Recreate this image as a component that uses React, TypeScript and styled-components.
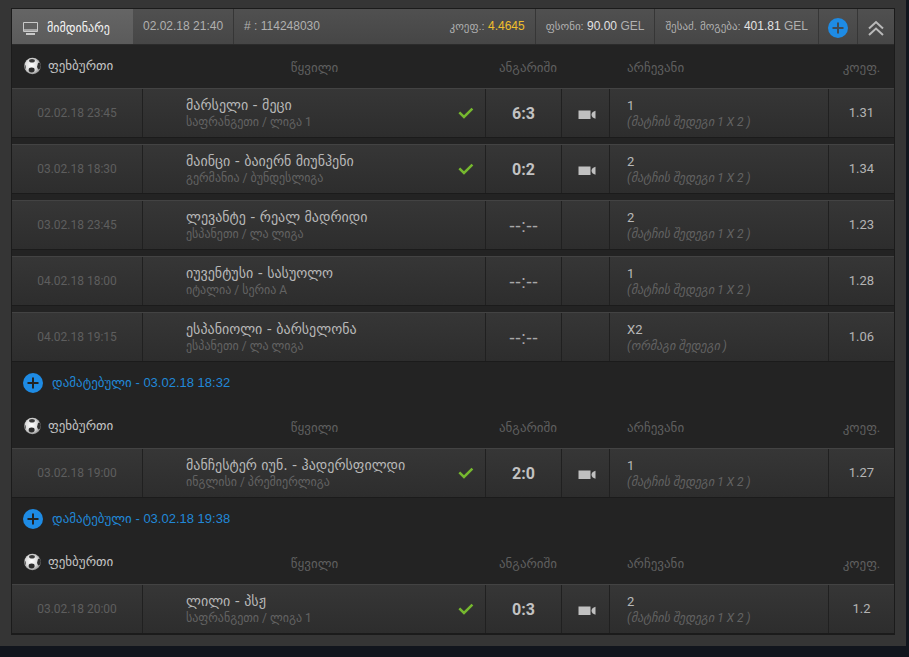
import React from "react";
import styled, { createGlobalStyle } from "styled-components";

const GlobalStyle = createGlobalStyle`
  * { box-sizing: border-box; }
  body {
    margin: 0;
    background: #11151d;
    color: #b4b4b4;
    font: 12px/16px Roboto, "DejaVu Sans", sans-serif;
  }
`;

const Frame = styled.main`
  margin-right: 3px;
  padding: 8px 11px 11px;
  background: #353535;
`;

const Ticket = styled.section`
  border: 1px solid #1b1b1b;
  background: #232323;
`;

const Summary = styled.header`
  display: flex;
  height: 36px;
  border-bottom: 1px solid #2b2b2b;
  background: linear-gradient(#505050, #464646);
  color: #b0b0b0;
  font-family: "Liberation Sans", "DejaVu Sans", sans-serif;
  white-space: nowrap;
`;

const Status = styled.div`
  display: flex;
  align-items: center;
  gap: 9px;
  width: 121px;
  padding: 2px 0 0 11px;
  background: linear-gradient(#656565, #5b5b5b);
  color: #f4f4f4;
  font-size: 12px;
`;

const SummaryCell = styled.div<{ $push?: boolean; $divided?: boolean }>`
  margin-left: ${(p) => (p.$push ? "auto" : 0)};
  padding: 9px 10px 0;
  border-right: ${(p) => (p.$divided ? "1px solid #363636" : "0")};
`;

const Label = styled.span<{ $large?: boolean }>`
  font-size: ${(p) => (p.$large ? "13px" : "11px")};
`;

const Amount = styled.span<{ $gold?: boolean }>`
  color: ${(p) => (p.$gold ? "#efbf2c" : "#e2e2e2")};
`;

const IconButton = styled.button<{ $divided?: boolean }>`
  display: grid;
  place-items: center;
  width: ${(p) => (p.$divided ? "39px" : "36px")};
  padding: 2px 0 0;
  border: 0;
  border-right: ${(p) => (p.$divided ? "1px solid #363636" : "0")};
  background: none;
  cursor: pointer;
`;

const Bets = styled.table`
  display: block;
`;

const BetsHead = styled.thead`
  display: block;
`;

const BetsBody = styled.tbody`
  display: flex;
  flex-direction: column;
  gap: 6px;
`;

const columns = "131px minmax(0, 1fr) 76px 48px 219px 65px";

const HeadRow = styled.tr`
  display: grid;
  grid-template-columns: ${columns};
  align-items: center;
  height: 43px;
  color: #5f5f5f;
`;

const Heading = styled.th<{ $start?: boolean; $wide?: boolean }>`
  padding: ${(p) => (p.$start ? "3px 0 0 17px" : p.$wide ? "3px 0 0 8px" : "3px 0 0")};
  text-align: ${(p) => (p.$start ? "left" : "center")};
  font-size: 13px;
  font-weight: 400;
`;

const Sport = styled.th`
  display: flex;
  align-items: center;
  gap: 6px;
  padding: 0 0 2px 12px;
  color: #c4c4c4;
  font-size: 13px;
  font-weight: 400;
`;

const Row = styled.tr`
  display: grid;
  grid-template-columns: ${columns};
  height: 50px;
  border-top: 1px solid #434343;
  border-bottom: 1px solid #1b1b1b;
  background: linear-gradient(#363636, #2d2d2d);
`;

const Cell = styled.td`
  display: flex;
  align-items: center;
  justify-content: center;
  padding: 0;
  border-right: 1px solid #202020;

  &:last-child {
    border-right: 0;
  }
`;

const TimeCell = styled(Cell)`
  color: #5e5e5e;
`;

const MatchCell = styled(Cell)`
  justify-content: space-between;
  padding: 0 11px 0 43px;
`;

const ScoreCell = styled(Cell)<{ $pending: boolean }>`
  padding-top: 2px;
  color: ${(p) => (p.$pending ? "#a8a8a8" : "#c2c2c2")};
  font-family: ${(p) => (p.$pending ? '"Liberation Sans", sans-serif' : "inherit")};
  font-size: ${(p) => (p.$pending ? "18px" : "16px")};
  font-weight: ${(p) => (p.$pending ? 400 : 700)};
`;

const VideoCell = styled(Cell)`
  padding: 3px 0 0 3px;
`;

const PickCell = styled(Cell)`
  justify-content: flex-start;
  padding-left: 17px;
`;

const OddsCell = styled(Cell)`
  font-size: 13px;
`;

const Primary = styled.div`
  color: #b8b8b8;
  font-family: "DejaVu Sans", sans-serif;
  font-size: 14px;
  line-height: 17px;
`;

const Pick = styled(Primary)`
  font-family: Roboto, sans-serif;
  font-size: 13px;
`;

const Secondary = styled.div<{ $italic?: boolean }>`
  color: #636363;
  font-size: 12px;
  font-style: ${(p) => (p.$italic ? "italic" : "normal")};
`;

const Added = styled.h2`
  display: flex;
  align-items: center;
  gap: 9px;
  height: 43px;
  margin: 0;
  padding: 0 0 2px 11px;
  color: #2188d8;
  font: 400 13px/16px "Liberation Sans", "DejaVu Sans", sans-serif;
`;

const PlusIcon = ({ size = 20, ink = "#232323" }: { size?: number; ink?: string }) => (
  <svg width={size} height={size} viewBox="0 0 20 20" aria-hidden="true">
    <circle cx="10" cy="10" r="10" fill="#1e8be4" />
    <path d="M10 4.5v11M4.5 10h11" stroke={ink} strokeWidth="2" />
  </svg>
);

const MonitorIcon = () => (
  <svg width="15" height="14" viewBox="0 0 15 14" aria-hidden="true">
    <path d="M.5 1.5h14v9H.5z" fill="none" stroke="#c9c9c9" />
    <path d="M1 8h13v2H1z" fill="#a5a5a5" />
    <path d="M3 13h9" stroke="#c9c9c9" strokeWidth="2" />
  </svg>
);

const CollapseIcon = () => (
  <svg width="16" height="16" viewBox="0 0 16 16" fill="none" stroke="#b9b9b9" strokeWidth="2" aria-hidden="true">
    <path d="M1 8.5 8 2l7 6.5M1 15l7-6.5 7 6.5" />
  </svg>
);

const BallIcon = () => (
  <svg width="18" height="18" viewBox="0 0 18 18" aria-hidden="true">
    <defs>
      <radialGradient id="ballShade" cx="45%" cy="45%" r="60%">
        <stop offset="0" stopColor="#fff" />
        <stop offset=".6" stopColor="#dcdcdc" />
        <stop offset="1" stopColor="#858585" />
      </radialGradient>
    </defs>
    <circle cx="8.5" cy="9" r="8.3" fill="url(#ballShade)" />
    <ellipse cx="8" cy="3.8" rx="2.9" ry="1.8" fill="#3a3a3a" />
    <ellipse cx="7.6" cy="13" rx="3" ry="2.4" fill="#2c2c2c" />
    <path d="m14 6 1.8-.6 1 3-.6 3.2-2 1-1.2-2.6z" fill="#303030" />
    <path d="m.6 7.5 1.2 1.2.1 2.8-1 .2z" fill="#555" />
  </svg>
);

const CheckIcon = () => (
  <svg width="16" height="12" viewBox="0 0 16 12" role="img" aria-label="✓">
    <path d="m1.3 5.3 4.7 4.6 8.4-8.2" fill="none" stroke="#76b82f" strokeWidth="2.5" />
  </svg>
);

const CameraIcon = () => (
  <svg width="18" height="9" viewBox="0 0 18 9" aria-hidden="true">
    <path d="M.5.5h12V9H.5z" fill="#c0c0c0" />
    <path d="M17.5.8V8.8Q13.5 7.6 13.5 4.8T17.5.8z" fill="#c0c0c0" />
  </svg>
);

type Bet = {
  time: string;
  match: string;
  league: string;
  score?: string;
  pick: string;
  market: string;
  odds: string;
};

const RESULT = "(მატჩის შედეგი 1 X 2 )";

const groups: { added?: string; bets: Bet[] }[] = [
  {
    bets: [
      { time: "02.02.18 23:45", match: "მარსელი - მეცი", league: "საფრანგეთი / ლიგა 1", score: "6:3", pick: "1", market: RESULT, odds: "1.31" },
      { time: "03.02.18 18:30", match: "მაინცი - ბაიერნ მიუნჰენი", league: "გერმანია / ბუნდესლიგა", score: "0:2", pick: "2", market: RESULT, odds: "1.34" },
      { time: "03.02.18 23:45", match: "ლევანტე - რეალ მადრიდი", league: "ესპანეთი / ლა ლიგა", pick: "2", market: RESULT, odds: "1.23" },
      { time: "04.02.18 18:00", match: "იუვენტუსი - სასუოლო", league: "იტალია / სერია A", pick: "1", market: RESULT, odds: "1.28" },
      { time: "04.02.18 19:15", match: "ესპანიოლი - ბარსელონა", league: "ესპანეთი / ლა ლიგა", pick: "X2", market: "(ორმაგი შედეგი )", odds: "1.06" },
    ],
  },
  {
    added: "03.02.18 18:32",
    bets: [
      { time: "03.02.18 19:00", match: "მანჩესტერ იუნ. - ჰადერსფილდი", league: "ინგლისი / პრემიერლიგა", score: "2:0", pick: "1", market: RESULT, odds: "1.27" },
    ],
  },
  {
    added: "03.02.18 19:38",
    bets: [
      { time: "03.02.18 20:00", match: "ლილი - პსჟ", league: "საფრანგეთი / ლიგა 1", score: "0:3", pick: "2", market: RESULT, odds: "1.2" },
    ],
  },
];

const BetRow = ({ bet }: { bet: Bet }) => (
  <Row>
    <TimeCell>{bet.time}</TimeCell>
    <MatchCell>
      <div>
        <Primary>{bet.match}</Primary>
        <Secondary>{bet.league}</Secondary>
      </div>
      {bet.score && <CheckIcon />}
    </MatchCell>
    <ScoreCell $pending={!bet.score}>{bet.score ?? "--:--"}</ScoreCell>
    <VideoCell>{bet.score && <CameraIcon />}</VideoCell>
    <PickCell>
      <div>
        <Pick>{bet.pick}</Pick>
        <Secondary $italic>{bet.market}</Secondary>
      </div>
    </PickCell>
    <OddsCell>{bet.odds}</OddsCell>
  </Row>
);

export default function App() {
  return (
    <>
      <GlobalStyle />
      <Frame>
        <Ticket>
          <Summary>
            <Status>
              <MonitorIcon />
              მიმდინარე
            </Status>
            <SummaryCell $divided>02.02.18 21:40</SummaryCell>
            <SummaryCell># : 114248030</SummaryCell>
            <SummaryCell $push $divided>
              <Label>კოეფ.:</Label> <Amount $gold>4.4645</Amount>
            </SummaryCell>
            <SummaryCell $divided>
              <Label>ფსონი:</Label> <Amount>90.00</Amount> GEL
            </SummaryCell>
            <SummaryCell $divided>
              <Label>შესაძ. მოგება:</Label> <Amount>401.81</Amount> GEL
            </SummaryCell>
            <IconButton type="button" $divided aria-label="დამატება">
              <PlusIcon ink="#3f4a55" />
            </IconButton>
            <IconButton type="button" aria-label="დახურვა">
              <CollapseIcon />
            </IconButton>
          </Summary>
          {groups.map((group, i) => (
            <React.Fragment key={i}>
              {group.added && (
                <Added>
                  <PlusIcon />
                  <span>
                    <Label $large>დამატებული</Label> - {group.added}
                  </span>
                </Added>
              )}
              <Bets>
                <BetsHead>
                  <HeadRow>
                    <Sport>
                      <BallIcon />
                      ფეხბურთი
                    </Sport>
                    <Heading>წყვილი</Heading>
                    <Heading $wide>ანგარიში</Heading>
                    <td />
                    <Heading $start>არჩევანი</Heading>
                    <Heading>კოეფ.</Heading>
                  </HeadRow>
                </BetsHead>
                <BetsBody>
                  {group.bets.map((bet) => (
                    <BetRow key={bet.time} bet={bet} />
                  ))}
                </BetsBody>
              </Bets>
            </React.Fragment>
          ))}
        </Ticket>
      </Frame>
    </>
  );
}
